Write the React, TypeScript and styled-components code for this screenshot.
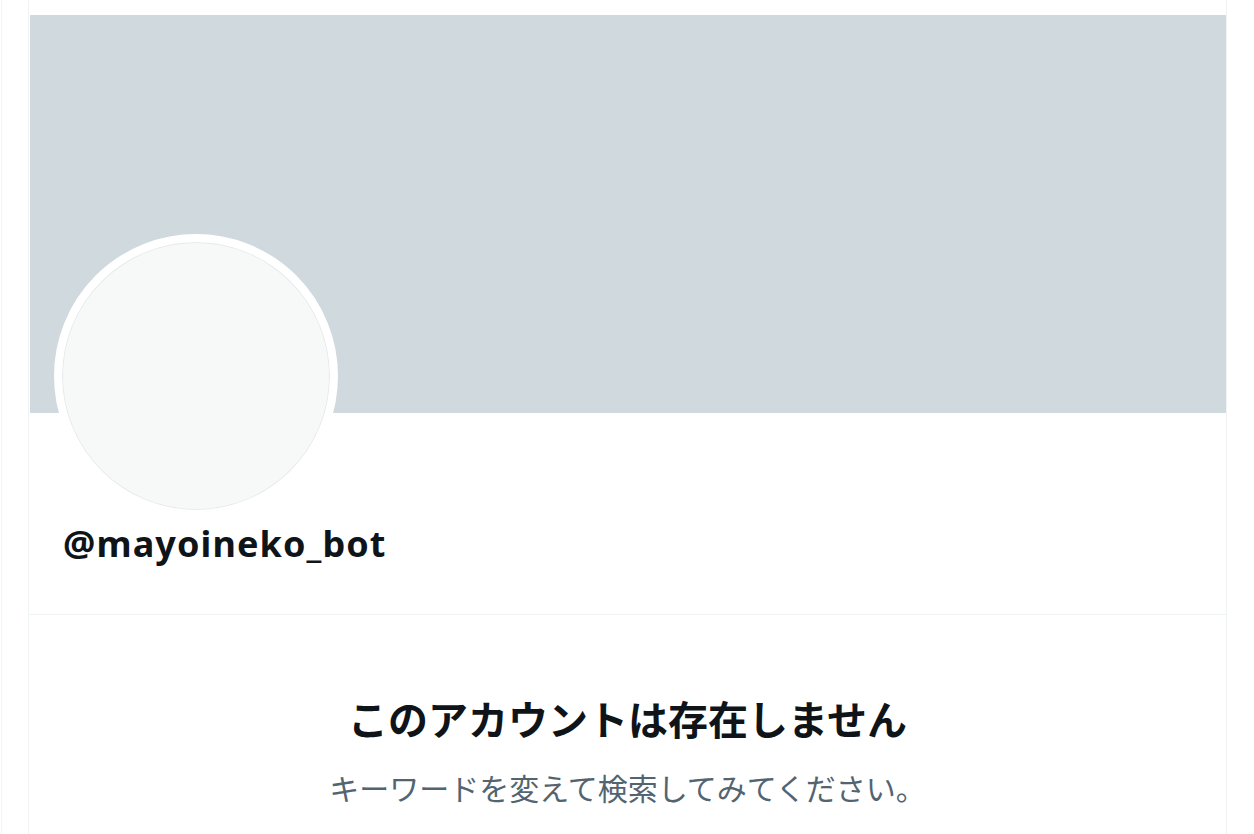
import React from "react";
import styled, { createGlobalStyle } from "styled-components";

const GlobalStyle = createGlobalStyle`
  html, body {
    margin: 0;
    padding: 0;
    background: #ffffff;
  }
  body {
    font-family: "Noto Sans", "Noto Sans CJK JP", sans-serif;
    color: #0f1419;
  }
`;

const Page = styled.div`
  display: flex;
  width: 1254px;
  height: 834px;
  overflow: hidden;
  background: #ffffff;
`;

const Rail = styled.div`
  margin-left: 1px;
  width: 26px;
  border-left: 1px solid #f2f4f5;
  border-right: 1px solid #eff3f4;
`;

const Column = styled.main`
  display: flex;
  flex-direction: column;
  width: 1197px;
  padding-top: 15px;
  border-right: 1px solid #eff3f4;
`;

const Banner = styled.div`
  height: 398px;
  margin-left: 1px;
  background: #cfd9de;
`;

const Profile = styled.section`
  display: flex;
  flex-direction: column;
  align-items: flex-start;
  padding: 0 0 0 25px;
  height: 201px;
  border-bottom: 1px solid #eff3f4;
`;

const Avatar = styled.div`
  width: 268px;
  height: 268px;
  margin-top: -179px;
  border-radius: 50%;
  border: 8px solid #ffffff;
  background: #f7f9f9;
  box-shadow: inset 0 0 0 1px #e6eaeb;
`;

const Handle = styled.h1`
  margin: 4px 0 0 9px;
  font-family: "Noto Sans", sans-serif;
  font-size: 36px;
  font-weight: 700;
  letter-spacing: 1.1px;
  line-height: 44px;
  color: #0f1419;
`;

const Empty = styled.section`
  display: flex;
  flex-direction: column;
  align-items: center;
  padding-top: 75px;
`;

const Title = styled.h2`
  margin: 0;
  font-family: "Noto Sans CJK JP", sans-serif;
  font-size: 40px;
  font-weight: 700;
  line-height: 56px;
  color: #0f1419;
`;

const Hint = styled.p`
  margin: 21px 0 0;
  font-family: "Noto Sans CJK JP", sans-serif;
  font-size: 30px;
  line-height: 40px;
  color: #536471;
`;

export default function App() {
  return (
    <>
      <GlobalStyle />
      <Page>
        <Rail />
        <Column>
          <Banner />
          <Profile>
            <Avatar />
            <Handle>@mayoineko_bot</Handle>
          </Profile>
          <Empty>
            <Title>このアカウントは存在しません</Title>
            <Hint>キーワードを変えて検索してみてください。</Hint>
          </Empty>
        </Column>
      </Page>
    </>
  );
}
